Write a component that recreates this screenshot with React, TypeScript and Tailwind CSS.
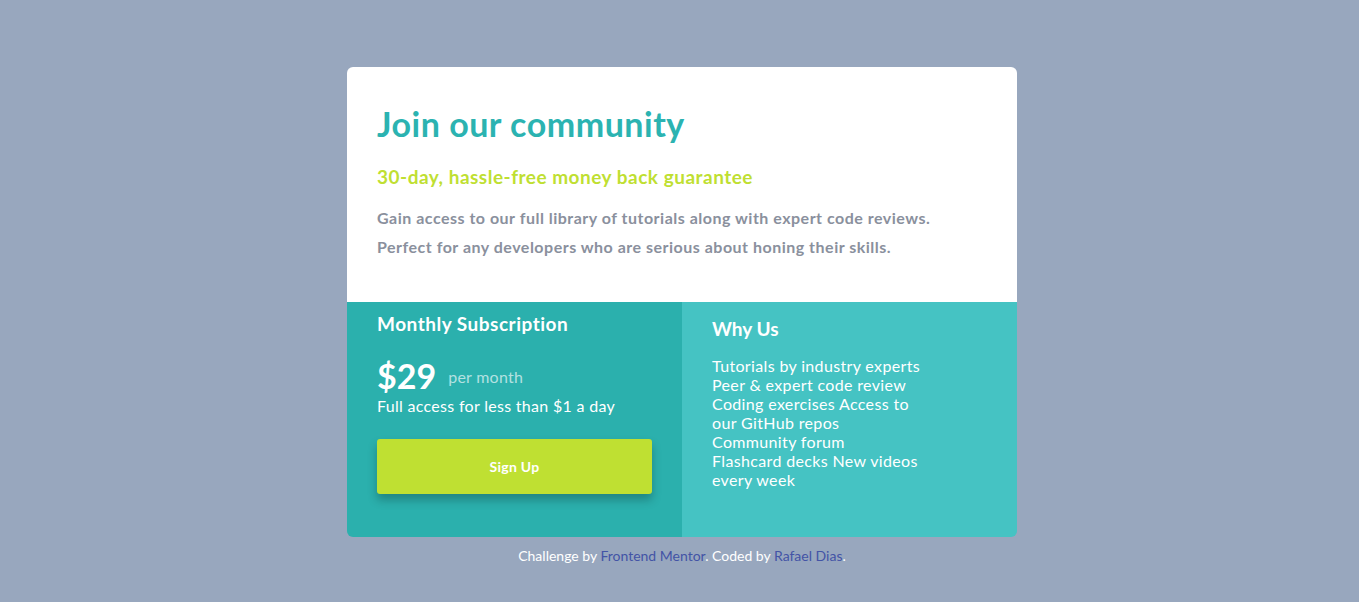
const features = [
  'Tutorials by industry experts',
  'Peer & expert code review',
  'Coding exercises Access to',
  'our GitHub repos',
  'Community forum',
  'Flashcard decks New videos',
  'every week',
]

export default function App() {
  return (
    <div className="min-h-screen bg-[#98a7be] flex flex-col items-center pt-[67px] pl-[5px] font-['Lato',sans-serif]">
      <div className="w-[670px] rounded-md overflow-hidden">
        {/* Top */}
        <div className="bg-white h-[235px] px-[30px] pt-[37px]">
          <h1 className="text-[34px] leading-[40px] tracking-[0.5px] font-bold text-[#2bb3b1]">Join our community</h1>
          <h2 className="mt-[20px] text-[19px] leading-[26px] tracking-[0.5px] font-bold text-[#bfdf32]">30-day, hassle-free money back guarantee</h2>
          <p className="mt-[13px] text-[16px] leading-[29px] tracking-[0.5px] font-bold text-[#8a909d]">
            Gain access to our full library of tutorials along with expert code reviews.
            <br />
            Perfect for any developers who are serious about honing their skills.
          </p>
        </div>

        {/* Bottom */}
        <div className="flex h-[235px]">
          <div className="w-1/2 bg-[#2bb0ad] px-[30px] pt-[10px]">
            <h3 className="text-[19px] leading-[24px] tracking-[0.5px] font-bold text-white">Monthly Subscription</h3>
            <div className="mt-[21px] flex items-center gap-[12px]">
              <span className="text-[34px] leading-[38px] font-bold text-white">$29</span>
              <span className="text-[16px] tracking-[0.25px] text-[#b3e1e1] mt-[2px]">per month</span>
            </div>
            <p className="text-[16px] leading-[22px] tracking-[0.3px] text-white">Full access for less than $1 a day</p>
            <button className="mt-[22px] w-[275px] h-[55px] bg-[#bfe032] rounded-[3px] text-white text-[14px] tracking-[0.3px] font-bold shadow-[0_6px_10px_rgba(0,0,0,0.25)]">
              Sign Up
            </button>
          </div>
          <div className="w-1/2 bg-[#45c3c3] px-[30px] pt-[15px]">
            <h3 className="text-[19px] leading-[24px] font-bold text-white">Why Us</h3>
            <ul className="mt-[15px] text-[16px] leading-[19px] tracking-[0.35px] text-white">
              {features.map((f, i) => (
                <li key={i}>{f}</li>
              ))}
            </ul>
          </div>
        </div>
      </div>

      <p className="mt-[10px] text-[14px] leading-[18px] text-white">
        Challenge by <a className="text-[#4354a6]">Frontend Mentor</a>. Coded by <a className="text-[#4354a6]">Rafael Dias</a>.
      </p>
    </div>
  )
}
